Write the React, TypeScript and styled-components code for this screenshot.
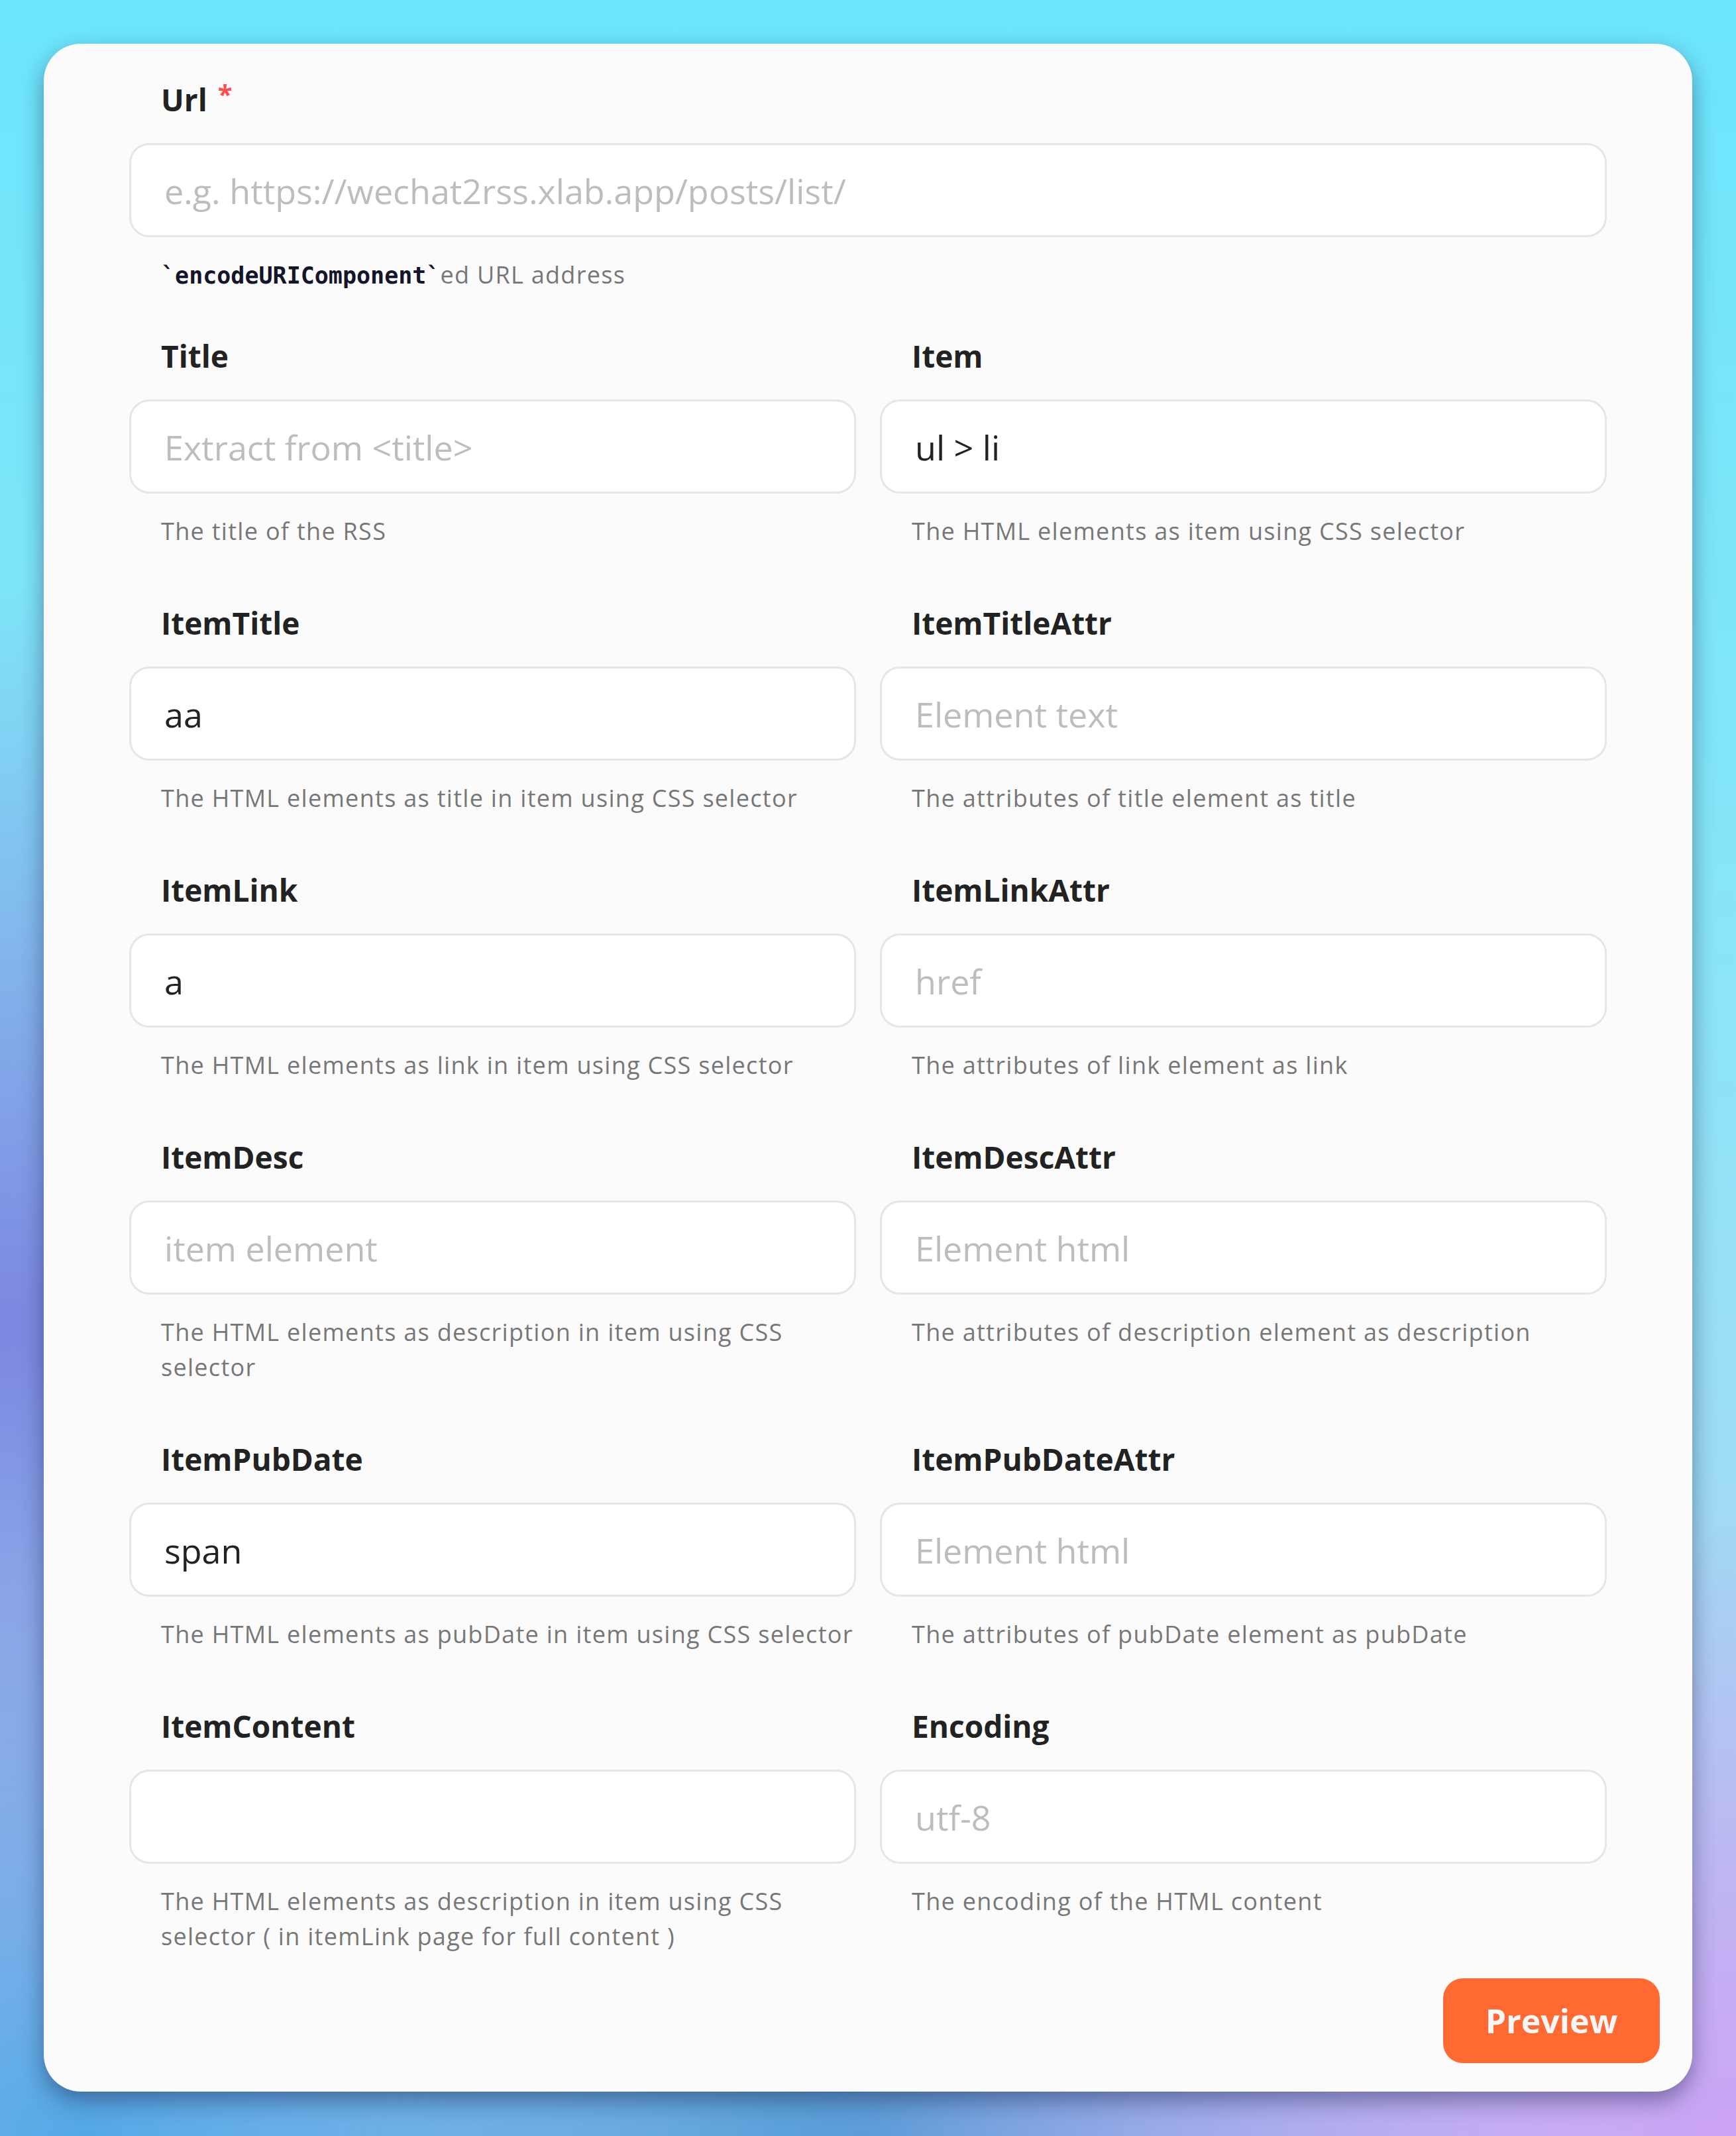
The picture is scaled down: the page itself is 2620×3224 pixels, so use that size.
import * as React from "react";
import styled, { createGlobalStyle } from "styled-components";

const GlobalStyle = createGlobalStyle`
  html, body {
    margin: 0;
    padding: 0;
  }
  body {
    font-family: "Open Sans", "Noto Sans", sans-serif;
  }
  * {
    box-sizing: border-box;
  }
`;

interface FieldData {
  label: string;
  placeholder?: string;
  value?: string;
  help: string;
}

const fields: FieldData[] = [
  { label: "Title", placeholder: "Extract from <title>", help: "The title of the RSS" },
  { label: "Item", value: "ul > li", help: "The HTML elements as item using CSS selector" },
  { label: "ItemTitle", value: "aa", help: "The HTML elements as title in item using CSS selector" },
  { label: "ItemTitleAttr", placeholder: "Element text", help: "The attributes of title element as title" },
  { label: "ItemLink", value: "a", help: "The HTML elements as link in item using CSS selector" },
  { label: "ItemLinkAttr", placeholder: "href", help: "The attributes of link element as link" },
  {
    label: "ItemDesc",
    placeholder: "item element",
    help: "The HTML elements as description in item using CSS selector",
  },
  {
    label: "ItemDescAttr",
    placeholder: "Element html",
    help: "The attributes of description element as description",
  },
  { label: "ItemPubDate", value: "span", help: "The HTML elements as pubDate in item using CSS selector" },
  { label: "ItemPubDateAttr", placeholder: "Element html", help: "The attributes of pubDate element as pubDate" },
  {
    label: "ItemContent",
    help: "The HTML elements as description in item using CSS selector ( in itemLink page for full content )",
  },
  { label: "Encoding", placeholder: "utf-8", help: "The encoding of the HTML content" },
];

const Field: React.FC<{ data: FieldData }> = ({ data }) => (
  <FieldBox>
    <Label>{data.label}</Label>
    <Input placeholder={data.placeholder} defaultValue={data.value} />
    <Help>{data.help}</Help>
  </FieldBox>
);

export default function App() {
  return (
    <Page>
      <GlobalStyle />
      <Card>
        <Form>
          <FieldBox>
            <Label>
              Url<Required>*</Required>
            </Label>
            <Input placeholder="e.g. https://wechat2rss.xlab.app/posts/list/" />
            <Help>
              <Code>`encodeURIComponent`</Code>ed URL address
            </Help>
          </FieldBox>
          <Grid>
            {fields.map((f) => (
              <Field key={f.label} data={f} />
            ))}
          </Grid>
        </Form>
        <Footer>
          <PreviewButton>Preview</PreviewButton>
        </Footer>
      </Card>
    </Page>
  );
}

const Page = styled.div`
  min-height: 100vh;
  padding: 66px;
  background:
    radial-gradient(ellipse 45% 35% at 0% 62%, rgba(122, 130, 224, 0.95), rgba(122, 130, 224, 0) 100%),
    radial-gradient(ellipse 55% 30% at 100% 100%, rgba(204, 164, 244, 1), rgba(204, 164, 244, 0) 100%),
    radial-gradient(ellipse 45% 25% at 5% 100%, rgba(84, 168, 230, 1), rgba(84, 168, 230, 0) 100%),
    radial-gradient(ellipse 40% 25% at 50% 100%, rgba(70, 150, 210, 0.9), rgba(70, 150, 210, 0) 100%),
    linear-gradient(180deg, #6ce5fc 0%, #86e6f8 40%, #9fdcf3 70%, #b0c8f0 100%);
`;

const Card = styled.div`
  background: #fbfbfb;
  border-radius: 56px;
  box-shadow: 0 14px 34px rgba(20, 30, 70, 0.45);
  display: flex;
  flex-direction: column;
`;

const Form = styled.div`
  padding: 56px 129px 0;
  display: flex;
  flex-direction: column;
  gap: 66px;
`;

const Grid = styled.div`
  display: grid;
  grid-template-columns: 1fr 1fr;
  column-gap: 36px;
  row-gap: 84px;
`;

const FieldBox = styled.div`
  display: flex;
  flex-direction: column;
  min-width: 0;
`;

const Label = styled.div`
  padding-left: 48px;
  height: 56px;
  line-height: 56px;
  margin-bottom: 38px;
  font-size: 46px;
  font-weight: 700;
  color: #222222;
`;

const Required = styled.span`
  color: #ff4d4f;
  margin-left: 16px;
  font-size: 40px;
  vertical-align: top;
  line-height: 40px;
`;

const Input = styled.input`
  display: block;
  width: 100%;
  height: 142px;
  border: 3px solid #e6e6e6;
  border-radius: 30px;
  background: #ffffff;
  padding: 0 50px;
  font-family: "Open Sans", "Noto Sans", sans-serif;
  font-size: 52px;
  color: #222222;
  outline: none;

  &::placeholder {
    color: #bdbdbd;
  }
`;

const Help = styled.div`
  margin-top: 30px;
  margin-right: -20px;
  padding-left: 48px;
  font-size: 36px;
  letter-spacing: 1.3px;
  line-height: 53px;
  color: #777777;
`;

const Code = styled.code`
  font-family: "DejaVu Sans Mono", "Liberation Mono", monospace;
  font-weight: 700;
  font-size: 35px;
  letter-spacing: 0;
  color: #14142a;
`;

const Footer = styled.div`
  display: flex;
  justify-content: flex-end;
  padding: 37px 49px 43px;
`;

const PreviewButton = styled.button`
  width: 327px;
  height: 128px;
  border: none;
  border-radius: 30px;
  background: #ff6a33;
  color: #f7f7f7;
  font-family: "Open Sans", "Noto Sans", sans-serif;
  font-size: 50px;
  font-weight: 700;
  cursor: pointer;
`;
